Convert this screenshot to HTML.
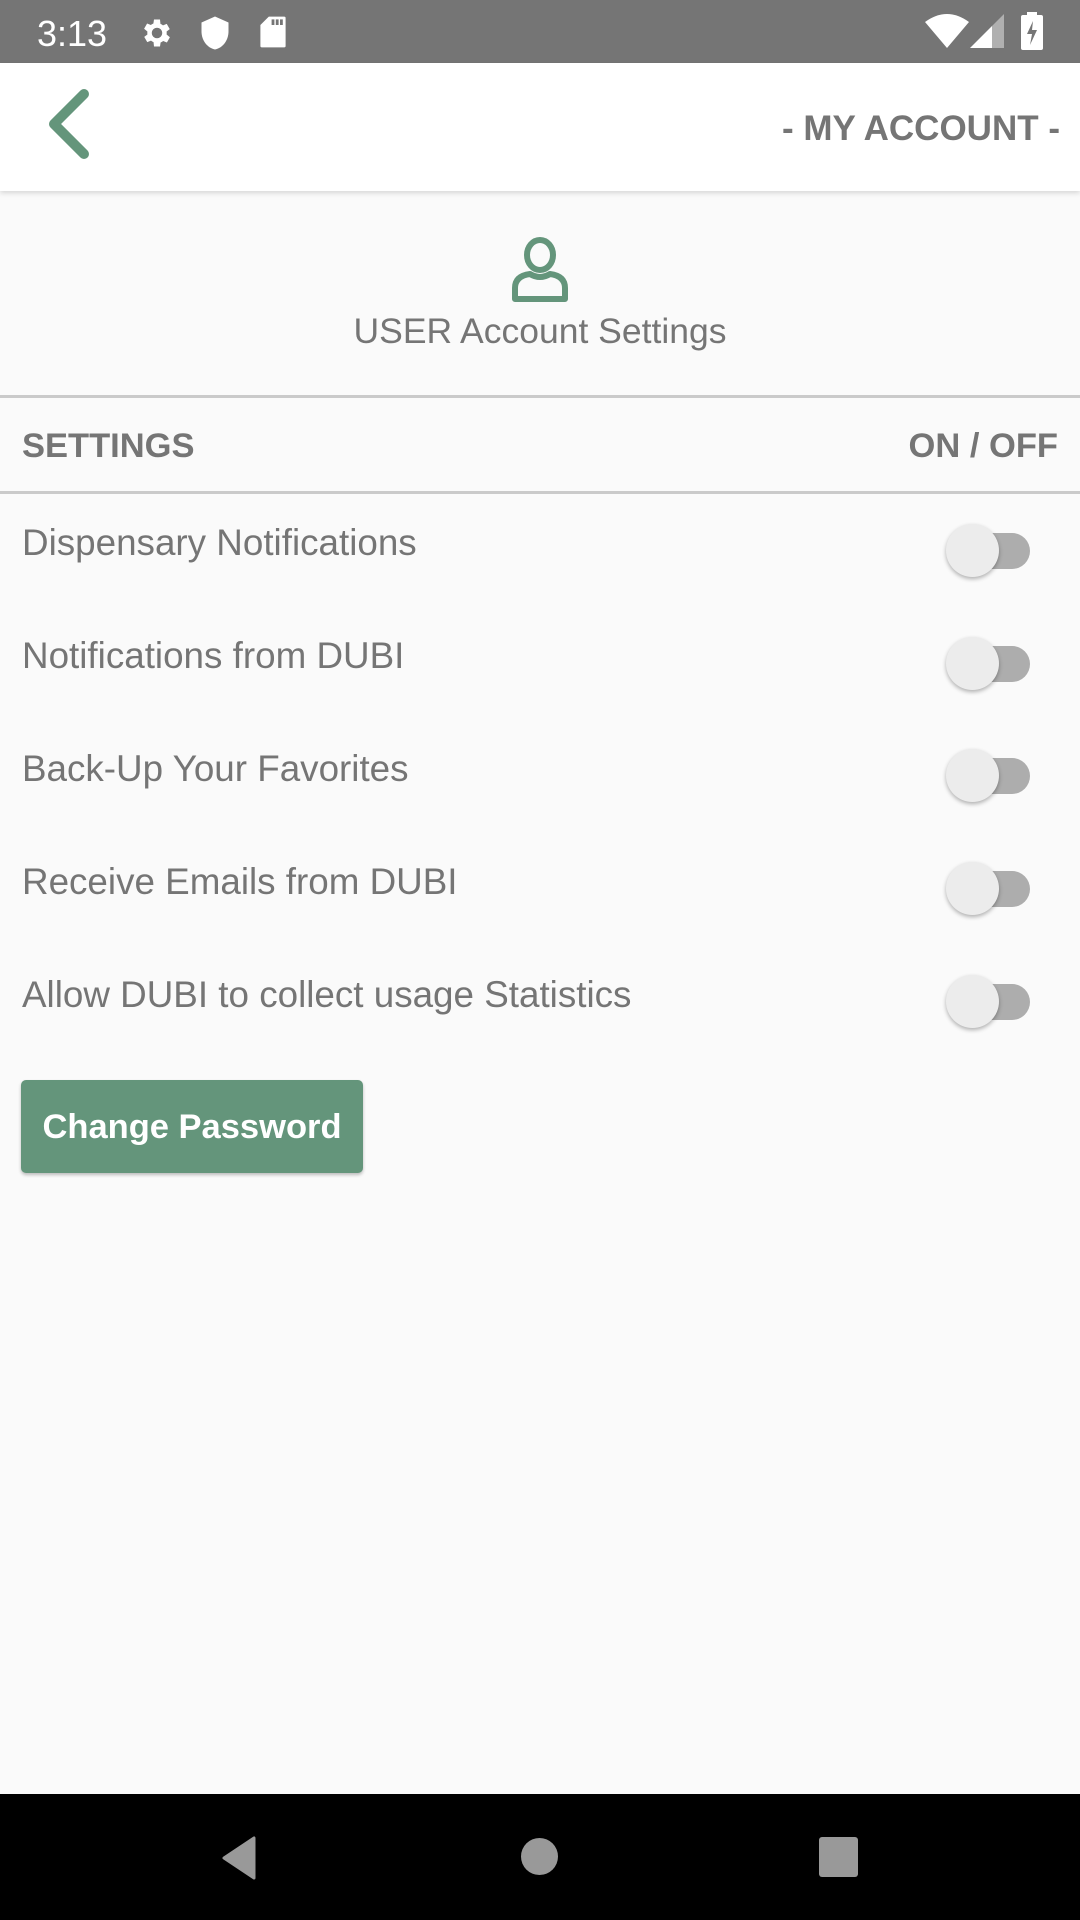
<!DOCTYPE html>
<html><head><meta charset="utf-8"><style>
*{margin:0;padding:0;box-sizing:border-box}
body{width:1080px;height:1920px;background:#fafafa;font-family:"Liberation Sans",sans-serif;position:relative;overflow:hidden;color:#757575}
.abs{position:absolute}
#status{left:0;top:0;width:1080px;height:63px;background:#757575}
#bar{left:0;top:63px;width:1080px;height:128px;background:#fff;box-shadow:0 2px 5px rgba(0,0,0,.15)}
.row{left:22px;font-size:36.8px;color:#757575;white-space:nowrap}
.tg{left:946px;width:84px;height:54px}
.tg .tr{position:absolute;left:14px;top:9px;width:70px;height:36px;border-radius:18px;background:#adadad}
.tg .th{position:absolute;left:0;top:0;width:53px;height:53px;border-radius:50%;background:#ececec;box-shadow:0 2px 4px rgba(0,0,0,.3)}
.line{left:0;width:1080px;height:3px;background:#cacaca}
</style></head><body>
<div id="status" class="abs"></div>
<div class="abs" style="left:37px;top:13px;font-size:36px;color:#fff">3:13</div>
<svg class="abs" style="left:139px;top:15px" width="36" height="36" viewBox="0 0 24 24"><path fill="#fff" d="M19.4 13a7.5 7.5 0 0 0 0-2l2.1-1.6-2-3.5-2.5 1a7 7 0 0 0-1.7-1L15 3h-4l-.4 2.7a7 7 0 0 0-1.7 1l-2.5-1-2 3.5L6.6 11a7.5 7.5 0 0 0 0 2l-2.1 1.6 2 3.5 2.5-1a7 7 0 0 0 1.7 1L11 21h4l.4-2.7a7 7 0 0 0 1.700-1l2.5 1 2-3.5zM13 15.5a3.5 3.5 0 1 1 0-7 3.5 3.5 0 0 1 0 7z" transform="translate(-1 0)"/></svg>
<svg class="abs" style="left:200px;top:15px" width="30" height="36" viewBox="0 0 20 24"><path fill="#fff" d="M10 1L1 5v6c0 6 4 11 9 12 5-1 9-6 9-12V5z"/></svg>
<svg class="abs" style="left:259px;top:15px" width="28" height="34" viewBox="0 0 20 24"><path fill="#fff" d="M7 1h11a1 1 0 0 1 1 1v20a1 1 0 0 1-1 1H2a1 1 0 0 1-1-1V7z"/><rect x="9" y="3" width="2" height="4" fill="#757575"/><rect x="12" y="3" width="2" height="4" fill="#757575"/><rect x="15" y="3" width="2" height="4" fill="#757575"/></svg>
<svg class="abs" style="left:925px;top:14px" width="44" height="34" viewBox="0 0 44 34"><path fill="#fff" d="M0 8Q22-8 44 8L22 34z"/></svg>
<svg class="abs" style="left:970px;top:14px" width="34" height="34" viewBox="0 0 34 34"><path fill="#fff" d="M0 34L22 12V34z"/><path fill="#b0b0b0" d="M22 12L34 0V34H22z"/></svg>
<svg class="abs" style="left:1021px;top:12px" width="22" height="38" viewBox="0 0 22 38"><rect x="6" y="0" width="10" height="4" fill="#fff"/><rect x="0" y="3" width="22" height="35" rx="2" fill="#fff"/><path fill="#757575" d="M12 9L6 22h5l-2 11 7-15h-5z"/></svg>

<div id="bar" class="abs"></div>
<svg class="abs" style="left:44px;top:88px" width="52" height="72" viewBox="0 0 52 72"><path d="M40 6L10 36l30 30" fill="none" stroke="#64957b" stroke-width="10" stroke-linecap="round" stroke-linejoin="round"/></svg>
<div class="abs" style="right:20px;top:109px;font-size:35px;font-weight:bold;color:#757575">- MY ACCOUNT -</div>

<svg class="abs" style="left:510px;top:236px" width="60" height="66" viewBox="0 0 60 66"><ellipse cx="30" cy="19" rx="13" ry="15" fill="none" stroke="#64957b" stroke-width="6"/><path d="M20 38Q30 44 40 38Q55 40 55 52V63H5V52Q5 40 20 38z" fill="none" stroke="#64957b" stroke-width="6" stroke-linejoin="round"/></svg>
<div class="abs" style="left:0;width:1080px;text-align:center;top:311px;font-size:35.5px;color:#757575">USER Account Settings</div>

<div class="abs line" style="top:395px"></div>
<div class="abs" style="left:22px;top:427px;font-size:34.5px;font-weight:bold;color:#757575">SETTINGS</div>
<div class="abs" style="right:22px;top:427px;font-size:34.5px;font-weight:bold;color:#757575">ON / OFF</div>
<div class="abs line" style="top:491px"></div>

<div class="abs row" style="top:522px">Dispensary Notifications</div>
<div class="abs row" style="top:635px">Notifications from DUBI</div>
<div class="abs row" style="top:748px">Back-Up Your Favorites</div>
<div class="abs row" style="top:861px">Receive Emails from DUBI</div>
<div class="abs row" style="top:974px">Allow DUBI to collect usage Statistics</div>

<div class="abs tg" style="top:524px"><div class="tr"></div><div class="th"></div></div>
<div class="abs tg" style="top:637px"><div class="tr"></div><div class="th"></div></div>
<div class="abs tg" style="top:749px"><div class="tr"></div><div class="th"></div></div>
<div class="abs tg" style="top:862px"><div class="tr"></div><div class="th"></div></div>
<div class="abs tg" style="top:975px"><div class="tr"></div><div class="th"></div></div>

<div class="abs" style="left:21px;top:1080px;width:342px;height:93px;background:#64957b;border-radius:5px;box-shadow:0 2px 3px rgba(0,0,0,.25);color:#fff;font-weight:bold;font-size:34.5px;text-align:center;line-height:95px">Change Password</div>

<div class="abs" style="left:0;top:1794px;width:1080px;height:126px;background:#000"></div>
<svg class="abs" style="left:218px;top:1836px" width="42" height="44" viewBox="0 0 42 44"><path d="M36 2V42L6 22z" fill="#999" stroke="#999" stroke-width="3" stroke-linejoin="round"/></svg>
<div class="abs" style="left:521px;top:1838px;width:37px;height:37px;border-radius:50%;background:#999"></div>
<div class="abs" style="left:819px;top:1837px;width:39px;height:40px;border-radius:3px;background:#999"></div>
</body></html>
